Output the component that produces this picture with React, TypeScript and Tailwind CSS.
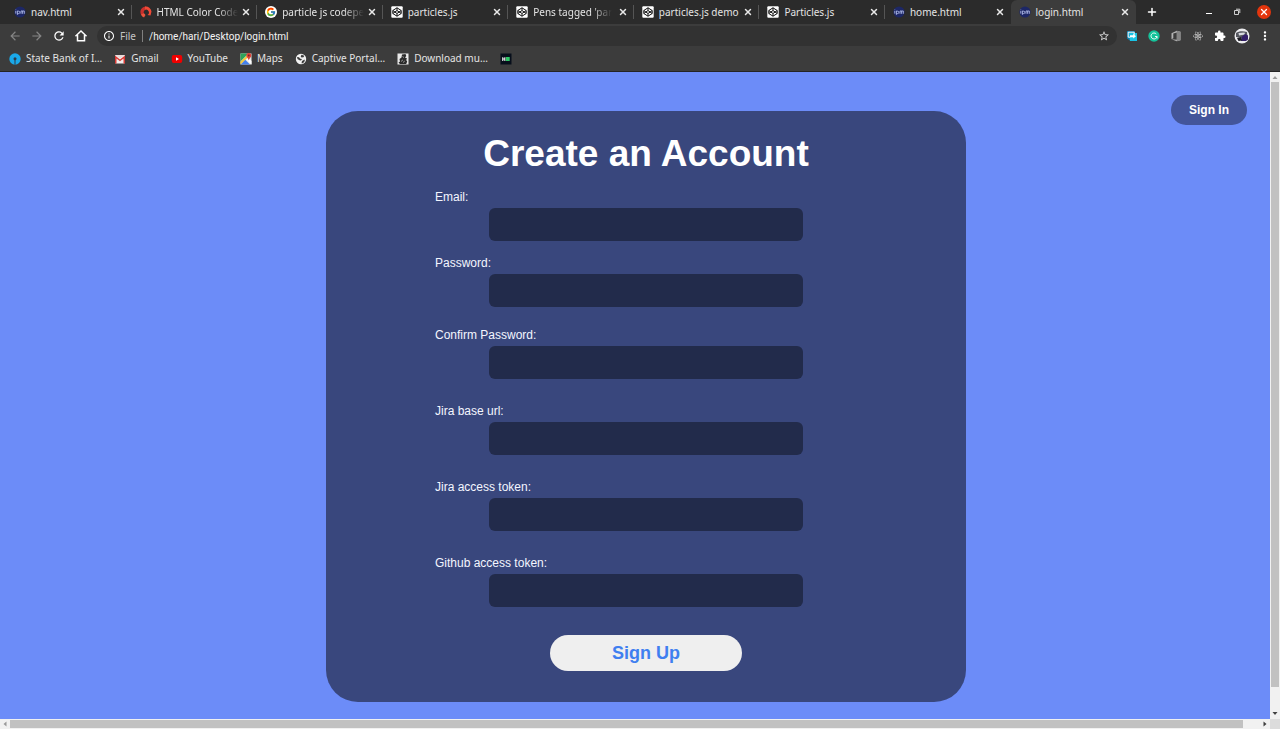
import React from "react";
import { Plus, X } from "lucide-react";
import { FcGoogle } from "react-icons/fc";
import { FaReact } from "react-icons/fa";
import {
  MdArrowBack,
  MdArrowForward,
  MdExtension,
  MdInfoOutline,
  MdMoreVert,
  MdRefresh,
  MdStarBorder,
} from "react-icons/md";

function IpmIcon() {
  return (
    <svg viewBox="0 0 12 12" className="size-3 shrink-0" aria-hidden="true">
      <circle cx="6" cy="6" r="5.6" fill="#1d2766" />
      <g fill="none" stroke="#aeb9e6" strokeWidth="0.9">
        <path d="M1.8 5v2.6M1.8 3.6v.6" />
        <path d="M3.4 4.8v4M3.4 5.2h1.2a1.2 1.2 0 0 1 0 2.4H3.4" />
        <path d="M7 7.8V5h1.6v2.8M8.6 5h1.7v2.8" />
      </g>
    </svg>
  );
}

function HtmlColorIcon() {
  return (
    <svg viewBox="0 0 12 12" className="size-3 shrink-0" aria-hidden="true">
      <path d="M6 .5A5.5 5.5 0 0 0 1 8.500L3 11l2-2.200A3 3 0 0 1 6 3.400z" fill="#c9302c" />
      <path d="M5 .6A5.600 5.600 0 0 1 11.500 5.500L10.500 9.500 7.500 9A3 3 0 0 0 5 3.600z" fill="#f04a37" />
      <path d="M1 8.500 4 7.300 5.500 9 4 11.500A5.500 5.500 0 0 1 1 8.500z" fill="#e9573f" />
    </svg>
  );
}

function CodepenIcon() {
  return (
    <svg viewBox="0 0 12 12" className="size-3 shrink-0" aria-hidden="true">
      <rect x="0.300" y="0.300" width="11.400" height="11.400" rx="1" fill="#fff" />
      <g fill="none" stroke="#111" strokeWidth="1" strokeLinejoin="round">
        <path d="M6 1.800 10.200 4.500v3L6 10.200 1.800 7.500v-3z" />
        <path d="M6 1.800v2.700M6 7.500v2.700M1.800 4.500 6 7.500l4.200-3M1.800 7.500 6 4.500l4.200 3" />
      </g>
    </svg>
  );
}

function GoogleIcon() {
  return (
    <span className="flex size-3 shrink-0 items-center justify-center rounded-full bg-white">
      <FcGoogle className="size-2.5" />
    </span>
  );
}

function SbiIcon() {
  return (
    <svg viewBox="0 0 12 12" className="size-3 shrink-0" aria-hidden="true">
      <circle cx="6" cy="6" r="5.700" fill="#1aa9ea" />
      <circle cx="6" cy="5.800" r="1.500" fill="#2f3a48" />
      <path d="M5.500 6h1v5.700h-1z" fill="#2f3a48" />
    </svg>
  );
}

function GmailIcon() {
  return (
    <svg viewBox="0 0 12 12" className="size-3 shrink-0" aria-hidden="true">
      <rect x="1" y="2" width="10" height="8.400" rx="0.800" fill="#f1eeee" />
      <path d="M1 10.400V2.600L6 6.600l5-4v7.800H9.500V5.600L6 8.300 2.500 5.600v4.800z" fill="#d93a35" />
      <path d="M1.500 2h9L6 5.500z" fill="#e9dada" />
    </svg>
  );
}

function YoutubeIcon() {
  return (
    <svg viewBox="0 0 12 12" className="size-3 shrink-0" aria-hidden="true">
      <rect x="0.800" y="2" width="10.400" height="8" rx="2" fill="#f00000" />
      <path d="M5 4.300 8 6 5 7.700z" fill="#fff" />
    </svg>
  );
}

function MapsIcon() {
  return (
    <svg viewBox="0 0 12 12" className="size-3 shrink-0" aria-hidden="true">
      <rect x="0.500" y="0.500" width="11" height="11" fill="#e5e7e6" />
      <path d="M.5.500h8L.500 8.500z" fill="#2ea35a" />
      <path d="M.5 11.500 5 6.500l5 5z" fill="#4480ec" />
      <path d="M.5 8.500 7 2.500l1.200 1.500-7.700 7.500z" fill="#f5c93b" />
      <path d="M6.500 6.500l5 5v-3.500L8 4.500z" fill="#fff" />
      <path d="M8.800 0a2.500 2.500 0 0 1 2.500 2.500C11.300 4.300 9.300 5 8.800 7.500 8.300 5 6.300 4.300 6.300 2.500A2.500 2.500 0 0 1 8.800 0z" fill="#df4438" />
      <circle cx="8.800" cy="2.500" r=".9" fill="#7f231d" />
    </svg>
  );
}

function GlobeIcon() {
  return (
    <svg viewBox="0 0 12 12" className="size-3 shrink-0" aria-hidden="true">
      <circle cx="6" cy="6" r="5.200" fill="#f2f2f2" />
      <path d="M2 4l2 .3 1.300 1.400 1.700.3-1 1.500-1.500-.2L2.500 6zM6.500 1.800l2.800 1-.8 1.400-2 .4-.8-1.200zM7 8l2.500-1.500.3 1.500L8 10.200H6.500z" fill="#3c3c3c" />
    </svg>
  );
}

function MusicIcon() {
  return (
    <svg viewBox="0 0 12 12" className="size-3 shrink-0" aria-hidden="true">
      <rect x="0.500" y="0.500" width="11" height="11" fill="#e9e9e9" />
      <path d="M5 1.500 8.500 1l.8 2-1.300 1.500 2 1-.8 1.500 1 1.500-1 2.500H3L1.500 9.500l1.500-1L2.500 6l2-1.500z" fill="#2b2b2b" />
      <path d="M4 8.500l2-1.700M6 9.500 7.800 8M5.500 3.500l1.500 1" stroke="#c8c8c8" strokeWidth=".7" />
    </svg>
  );
}

function HackerIcon() {
  return (
    <svg viewBox="0 0 12 12" className="size-3 shrink-0" aria-hidden="true">
      <rect x="0.500" y="0.500" width="11" height="11" fill="#070e1b" />
      <path d="M2.200 4.200h1.100v1.200h1V4.200h1.100v3.700H4.300V6.500h-1v1.400H2.200z" fill="#f3f3f3" />
      <rect x="5.900" y="4" width="3.800" height="4" fill="#2ec866" />
    </svg>
  );
}

function HomeIcon() {
  return (
    <svg viewBox="0 0 14 14" className="size-3.5" fill="none" stroke="currentColor" strokeWidth="1.500" aria-hidden="true">
      <path d="M1.500 7.300 7 2l5.500 5.300" />
      <path d="M3.500 6v5.800h7V6" />
    </svg>
  );
}

function ShareIcon() {
  return (
    <svg viewBox="0 0 12 12" className="size-3" aria-hidden="true">
      <path d="M1 1h8v3h2v7H4.500L1 8.500z" fill="#127ba8" />
      <path d="M3 3h8v8H4z" fill="#19c3e5" />
      <path d="M2.200 2.200h6v2.600M2.200 2.200v5h2" stroke="#fff" fill="none" />
      <path d="M4 5.200h3.200V3.800L10 6.200 7.200 8.500V7.200H4z" fill="#fff" />
    </svg>
  );
}

function GrammarlyIcon() {
  return (
    <svg viewBox="0 0 12 12" className="size-3" aria-hidden="true">
      <circle cx="6" cy="6" r="5.700" fill="#15c39a" />
      <path d="M8.300 4A3 3 0 1 0 9 6.500H7M9 6.500v2" stroke="#fff" fill="none" strokeWidth="0.900" />
    </svg>
  );
}

function OfficeIcon() {
  return (
    <svg viewBox="0 0 12 12" className="size-3" aria-hidden="true">
      <path d="M1.500 3.200 6.800.8l3.700 1v8.400l-3.700 1-5.300-2L6.800 9.800V2.600L3.300 3.600v4.600l-1.800 1z" fill="#b4b4b4" />
      <path d="M6.800.8v10.400l3.700-1V1.800z" fill="#858585" />
    </svg>
  );
}

function AvatarIcon() {
  return (
    <svg viewBox="0 0 16 16" className="size-4" aria-hidden="true">
      <circle cx="8" cy="8" r="7.500" fill="#ececef" />
      <path d="M2 5C4.500 3 9 2.500 13 4l.5 5-4.500 1-7-1z" fill="#55575f" />
      <path d="M4.500 5l6-.5.500 2L5 7.500z" fill="#d7dae0" />
      <path d="M7.500 9l3.500-3 3 1.500v4L12 13H7z" fill="#321e68" />
      <path d="M3 10l4-1 1 3.500-3.500.5z" fill="#1b1b22" />
    </svg>
  );
}

type Tab = { title: string; icon: React.ReactNode; active?: boolean; divider?: boolean; faded?: boolean };

const tabs: Tab[] = [
  { title: "nav.html", icon: <IpmIcon />, divider: true },
  { title: "HTML Color Code", icon: <HtmlColorIcon />, divider: true, faded: true },
  { title: "particle js codepe", icon: <GoogleIcon />, divider: true, faded: true },
  { title: "particles.js", icon: <CodepenIcon />, divider: true },
  { title: "Pens tagged 'par", icon: <CodepenIcon />, divider: true, faded: true },
  { title: "particles.js demo", icon: <CodepenIcon />, divider: true },
  { title: "Particles.js", icon: <CodepenIcon />, divider: true },
  { title: "home.html", icon: <IpmIcon /> },
  { title: "login.html", icon: <IpmIcon />, active: true },
];

const bookmarks = [
  { title: "State Bank of I…", icon: <SbiIcon /> },
  { title: "Gmail", icon: <GmailIcon /> },
  { title: "YouTube", icon: <YoutubeIcon /> },
  { title: "Maps", icon: <MapsIcon /> },
  { title: "Captive Portal…", icon: <GlobeIcon /> },
  { title: "Download mu…", icon: <MusicIcon /> },
  { title: "", label: "HackerRank", icon: <HackerIcon /> },
];

const fields = [
  { id: "email", label: "Email:", type: "email", gap: "mb-3.5" },
  { id: "password", label: "Password:", type: "password", gap: "mb-5" },
  { id: "confirm", label: "Confirm Password:", type: "password", gap: "mb-6" },
  { id: "jira-url", label: "Jira base url:", type: "url", gap: "mb-6" },
  { id: "jira-token", label: "Jira access token:", type: "text", gap: "mb-6" },
  { id: "github-token", label: "Github access token:", type: "text", gap: "mb-7" },
];

function TabStrip() {
  return (
    <div className="flex h-6 bg-[#2b2b2b] pl-1.5">
      <div role="tablist" className="flex min-w-0 flex-1">
        {tabs.map((tab, i) => (
          <div
            key={i}
            className={
              "flex min-w-0 flex-1 basis-0 items-center rounded-t-md pl-2 " +
              (tab.active ? "bg-[#3c3c3c]" : "")
            }
          >
            {tab.icon}
            <button
              role="tab"
              aria-selected={!!tab.active}
              className="ml-[5px] min-w-0 flex-1 whitespace-nowrap text-left text-[10px] leading-4 text-[#e4e4e4]"
            >
              <span className={tab.faded ? "inline-block mask-r-from-75%" : "inline-block"}>{tab.title}</span>
            </button>
            <button aria-label="Close tab" className="shrink-0 text-[#e8e8e8]">
              <X className="size-2.5" strokeWidth={3.5} />
            </button>
            <span className={"ml-[5px] h-3.5 w-px shrink-0 " + (tab.divider ? "bg-[#555]" : "")} />
          </div>
        ))}
      </div>
      <div className="flex w-36 shrink-0 items-center text-white">
        <button aria-label="New tab" className="ml-2.5">
          <Plus className="size-3" strokeWidth={3} />
        </button>
        <button aria-label="Minimize" className="ml-auto flex size-4 items-center justify-center">
          <span className="mt-0.5 h-px w-1.5 bg-white" />
        </button>
        <button aria-label="Restore" className="ml-3 flex size-4 items-center justify-center">
          <svg viewBox="0 0 8 8" className="size-2" fill="none" stroke="#cfcfcf">
            <path d="M1.500 2.500h4v4h-4zM3 1.200h3.800v3.800" />
          </svg>
        </button>
        <button aria-label="Close" className="ml-3 mr-[9px] flex size-3.5 items-center justify-center rounded-full bg-[#e3350d]">
          <X className="size-2.5" strokeWidth={3} />
        </button>
      </div>
    </div>
  );
}

const cell = "flex w-[22px] items-center justify-center";

function Toolbar() {
  return (
    <div className="flex h-6 items-center pl-1 pr-[3px] text-white">
      <div className="flex items-center">
        <button aria-label="Back" className={cell + " text-[#858585]"}><MdArrowBack className="size-3.5" /></button>
        <button aria-label="Forward" className={cell + " text-[#858585]"}><MdArrowForward className="size-3.5" /></button>
        <button aria-label="Reload" className={cell}><MdRefresh className="size-3.5" /></button>
        <button aria-label="Home" className={cell}><HomeIcon /></button>
      </div>
      <div className="ml-[5px] flex h-5 min-w-0 flex-1 items-center rounded-full bg-[#323232] pl-1.5 pr-[7px] text-[10px]">
        <MdInfoOutline className="size-3 shrink-0" />
        <span className="ml-[5px] text-[#c4c4c4]">File</span>
        <span className="mx-1.5 h-3 w-px bg-[#808080]" />
        <input
          aria-label="Address"
          defaultValue="/home/hari/Desktop/login.html"
          className="min-w-0 flex-1 bg-transparent font-[Roboto,sans-serif] text-[#f4f4f4] outline-none"
        />
        <button aria-label="Bookmark this page" className="text-[#dadada]"><MdStarBorder className="size-3" /></button>
      </div>
      <div className="ml-1 flex items-center">
        <button aria-label="Share" className={cell}><ShareIcon /></button>
        <button aria-label="Grammar check" className={cell}><GrammarlyIcon /></button>
        <button aria-label="Office" className={cell}><OfficeIcon /></button>
        <button aria-label="React tools" className={cell + " text-[#dcdcdc]"}><FaReact className="size-3 p-px" /></button>
        <button aria-label="Extensions" className={cell}><MdExtension className="size-3" /></button>
        <button aria-label="Profile" className={cell}><AvatarIcon /></button>
        <button aria-label="Menu" className="flex w-6 items-center justify-center"><MdMoreVert className="size-3.5" /></button>
      </div>
    </div>
  );
}

function BookmarkBar() {
  return (
    <nav className="flex h-6 items-center gap-3 border-b border-[#242424] pl-[9px] pr-2 pb-0.5 text-[10px] text-[#e4e4e4]">
      {bookmarks.map((b) => (
        <a key={b.title} href="#" aria-label={b.label} className="flex items-center gap-[5px] whitespace-nowrap">
          {b.icon}
          {b.title}
        </a>
      ))}
    </nav>
  );
}

function SignUpForm() {
  return (
    <form
      onSubmit={(e) => e.preventDefault()}
      className="rounded-[32px] bg-[#39477d] px-6 pt-5 pb-[31px] text-xs text-[#f4f6ff] sm:px-[109px]"
    >
      <h1 className="mb-3 text-center text-[37px] leading-[46px] font-bold whitespace-nowrap text-white">Create an Account</h1>
      {fields.map((f) => (
        <div key={f.id} className={f.gap}>
          <label htmlFor={f.id} className="mb-[3px] block leading-4">{f.label}</label>
          <input
            id={f.id}
            type={f.type}
            className="mx-auto block h-[33px] w-full max-w-[314px] rounded-md bg-[#222b4b] px-3 text-white outline-none"
          />
        </div>
      ))}
      <button type="submit" className="mx-auto block h-9 w-48 rounded-full bg-[#efefef] text-lg leading-6 font-bold text-[#3f7ff0]">
        Sign Up
      </button>
    </form>
  );
}

function Arrow({ d, dim }: { d: string; dim?: boolean }) {
  return (
    <svg viewBox="0 0 10 10" className="size-2.5 shrink-0" aria-hidden="true">
      <path d={d} fill={dim ? "#9a9a9a" : "#404040"} />
    </svg>
  );
}

export default function App() {
  return (
    <div className="flex min-h-screen flex-col">
      <header className="bg-[#3c3c3c] font-['Noto_Sans','Open_Sans',sans-serif]">
        <TabStrip />
        <Toolbar />
        <BookmarkBar />
      </header>
      <div className="grid flex-1 grid-cols-[minmax(0,1fr)_10px] grid-rows-[1fr_10px]">
        <main className="grid grid-cols-[1fr_minmax(0,640px)_1fr] items-start bg-[#6c8cf8] pt-[39px] pb-[17px] pl-[22px] font-['Liberation_Sans',Arial,sans-serif]">
          <div className="col-start-2">
            <SignUpForm />
          </div>
          <div className="-mt-4 mr-[23px] flex justify-end">
            <button className="h-[30px] w-19 rounded-full bg-[#43559a] text-xs font-bold text-white">Sign In</button>
          </div>
        </main>
        <div className="flex flex-col items-center bg-[#f1f1f1]">
          <Arrow dim d="M2.500 7 5 4l2.500 3z" />
          <div className="w-2 flex-1 bg-[#c1c1c1]" />
          <div className="h-[22px]" />
          <Arrow d="M2.500 3 5 6l2.500-3z" />
        </div>
        <div className="flex items-center bg-[#f1f1f1]">
          <Arrow dim d="M6.500 2.500 3.500 5l3 2.500z" />
          <div className="h-2 flex-1 bg-[#c1c1c1]" />
          <div className="w-[17px]" />
          <Arrow d="M3.500 2.500 6.500 5l-3 2.500z" />
        </div>
        <div className="bg-[#dcdcdc]" />
      </div>
    </div>
  );
}
